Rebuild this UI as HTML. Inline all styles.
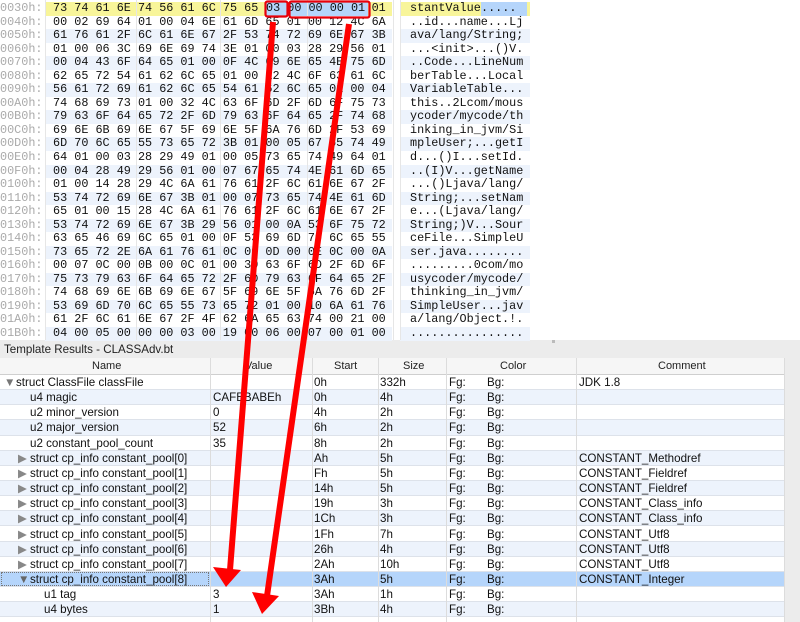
<!DOCTYPE html>
<html><head><meta charset="utf-8"><style>
*{margin:0;padding:0;box-sizing:border-box}
body{width:800px;height:622px;overflow:hidden;background:#fff;position:relative;font-family:"Liberation Sans",sans-serif}
.hr{position:absolute;left:0;width:800px;height:13.54px;font-family:"Liberation Mono",monospace;font-size:11.8px;line-height:13.54px;white-space:pre;color:#111}
.off{position:absolute;left:0;color:#aaa;width:45px}
.hx{position:absolute;left:45px;width:347px;height:13.54px;padding-left:8px}
.as{position:absolute;left:400px;width:130px;height:13.54px;padding-left:10px}
.b .hx,.b .as{background:#edf3fc}
.y .hx,.y .as{background:#f8f59a}
.vl{position:absolute;top:0;height:340px;width:1px;background:#e6e6e6}
.tr{position:absolute;left:0;width:784px;height:15.15px;font-size:11.6px;line-height:15.15px;color:#111;border-bottom:1px solid #dde2ea}
.tr.b{background:#edf3fc}
.tr.s{background:#b5d5fb}
.tr span{position:absolute;top:0}
.c{position:absolute;top:358px;width:1px;height:264px;background:#dcdcdc}
</style></head><body>
<div style="position:absolute;left:0;top:340px;width:800px;height:282px;background:#ececec"></div>
<div style="position:absolute;left:552px;top:340px;width:3px;height:3px;background:#bbb"></div>
<div style="position:absolute;left:4px;top:343px;font-size:11.6px;color:#222">Template Results - CLASSAdv.bt</div>
<div style="position:absolute;left:0;top:358px;width:784px;height:17px;background:#f6f6f6;border-bottom:1px solid #cfcfcf;font-size:11px;color:#222">
<span style="position:absolute;left:92px;top:2px">Name</span><span style="position:absolute;left:245px;top:2px">Value</span><span style="position:absolute;left:334px;top:2px">Start</span><span style="position:absolute;left:403px;top:2px">Size</span><span style="position:absolute;left:500px;top:2px">Color</span><span style="position:absolute;left:658px;top:2px">Comment</span></div>
<div style="position:absolute;left:0;top:375px;width:784px;height:247px;background:#fff"></div>

<div class="hr y" style="top:2px"><span class="off">0030h:</span><span class="hx">73 74 61 6E 74 56 61 6C 75 65 03 00 00 00 01 01</span><span class="as">stantValue......</span></div>
<div style="position:absolute;left:265px;top:2px;width:103px;height:13.5px;background:#b5d5fb"></div>
<div style="position:absolute;left:266px;top:2px;font-family:'Liberation Mono',monospace;font-size:11.8px;line-height:13.54px;white-space:pre;color:#111">03 00 00 00 01</div>
<div style="position:absolute;left:481px;top:2px;width:46px;height:13.5px;background:#b5d5fb"></div>
<div style="position:absolute;left:481px;top:2px;font-family:'Liberation Mono',monospace;font-size:11.8px;line-height:13.54px;white-space:pre;color:#111">.....</div>
<div class="hr" style="top:15.5px"><span class="off">0040h:</span><span class="hx">00 02 69 64 01 00 04 6E 61 6D 65 01 00 12 4C 6A</span><span class="as">..id...name...Lj</span></div>
<div class="hr b" style="top:29.1px"><span class="off">0050h:</span><span class="hx">61 76 61 2F 6C 61 6E 67 2F 53 74 72 69 6E 67 3B</span><span class="as">ava/lang/String;</span></div>
<div class="hr" style="top:42.6px"><span class="off">0060h:</span><span class="hx">01 00 06 3C 69 6E 69 74 3E 01 00 03 28 29 56 01</span><span class="as">...&lt;init&gt;...()V.</span></div>
<div class="hr b" style="top:56.2px"><span class="off">0070h:</span><span class="hx">00 04 43 6F 64 65 01 00 0F 4C 69 6E 65 4E 75 6D</span><span class="as">..Code...LineNum</span></div>
<div class="hr" style="top:69.7px"><span class="off">0080h:</span><span class="hx">62 65 72 54 61 62 6C 65 01 00 12 4C 6F 63 61 6C</span><span class="as">berTable...Local</span></div>
<div class="hr b" style="top:83.2px"><span class="off">0090h:</span><span class="hx">56 61 72 69 61 62 6C 65 54 61 62 6C 65 01 00 04</span><span class="as">VariableTable...</span></div>
<div class="hr" style="top:96.8px"><span class="off">00A0h:</span><span class="hx">74 68 69 73 01 00 32 4C 63 6F 6D 2F 6D 6F 75 73</span><span class="as">this..2Lcom/mous</span></div>
<div class="hr b" style="top:110.3px"><span class="off">00B0h:</span><span class="hx">79 63 6F 64 65 72 2F 6D 79 63 6F 64 65 2F 74 68</span><span class="as">ycoder/mycode/th</span></div>
<div class="hr" style="top:123.9px"><span class="off">00C0h:</span><span class="hx">69 6E 6B 69 6E 67 5F 69 6E 5F 6A 76 6D 2F 53 69</span><span class="as">inking_in_jvm/Si</span></div>
<div class="hr b" style="top:137.4px"><span class="off">00D0h:</span><span class="hx">6D 70 6C 65 55 73 65 72 3B 01 00 05 67 65 74 49</span><span class="as">mpleUser;...getI</span></div>
<div class="hr" style="top:150.9px"><span class="off">00E0h:</span><span class="hx">64 01 00 03 28 29 49 01 00 05 73 65 74 49 64 01</span><span class="as">d...()I...setId.</span></div>
<div class="hr b" style="top:164.5px"><span class="off">00F0h:</span><span class="hx">00 04 28 49 29 56 01 00 07 67 65 74 4E 61 6D 65</span><span class="as">..(I)V...getName</span></div>
<div class="hr" style="top:178px"><span class="off">0100h:</span><span class="hx">01 00 14 28 29 4C 6A 61 76 61 2F 6C 61 6E 67 2F</span><span class="as">...()Ljava/lang/</span></div>
<div class="hr b" style="top:191.6px"><span class="off">0110h:</span><span class="hx">53 74 72 69 6E 67 3B 01 00 07 73 65 74 4E 61 6D</span><span class="as">String;...setNam</span></div>
<div class="hr" style="top:205.1px"><span class="off">0120h:</span><span class="hx">65 01 00 15 28 4C 6A 61 76 61 2F 6C 61 6E 67 2F</span><span class="as">e...(Ljava/lang/</span></div>
<div class="hr b" style="top:218.6px"><span class="off">0130h:</span><span class="hx">53 74 72 69 6E 67 3B 29 56 01 00 0A 53 6F 75 72</span><span class="as">String;)V...Sour</span></div>
<div class="hr" style="top:232.2px"><span class="off">0140h:</span><span class="hx">63 65 46 69 6C 65 01 00 0F 53 69 6D 70 6C 65 55</span><span class="as">ceFile...SimpleU</span></div>
<div class="hr b" style="top:245.7px"><span class="off">0150h:</span><span class="hx">73 65 72 2E 6A 61 76 61 0C 00 0D 00 0E 0C 00 0A</span><span class="as">ser.java........</span></div>
<div class="hr" style="top:259.3px"><span class="off">0160h:</span><span class="hx">00 07 0C 00 0B 00 0C 01 00 30 63 6F 6D 2F 6D 6F</span><span class="as">.........0com/mo</span></div>
<div class="hr b" style="top:272.8px"><span class="off">0170h:</span><span class="hx">75 73 79 63 6F 64 65 72 2F 6D 79 63 6F 64 65 2F</span><span class="as">usycoder/mycode/</span></div>
<div class="hr" style="top:286.3px"><span class="off">0180h:</span><span class="hx">74 68 69 6E 6B 69 6E 67 5F 69 6E 5F 6A 76 6D 2F</span><span class="as">thinking_in_jvm/</span></div>
<div class="hr b" style="top:299.9px"><span class="off">0190h:</span><span class="hx">53 69 6D 70 6C 65 55 73 65 72 01 00 10 6A 61 76</span><span class="as">SimpleUser...jav</span></div>
<div class="hr" style="top:313.4px"><span class="off">01A0h:</span><span class="hx">61 2F 6C 61 6E 67 2F 4F 62 6A 65 63 74 00 21 00</span><span class="as">a/lang/Object.!.</span></div>
<div class="hr b" style="top:327px"><span class="off">01B0h:</span><span class="hx">04 00 05 00 00 00 03 00 19 00 06 00 07 00 01 00</span><span class="as">................</span></div>
<div class="vl" style="left:45px"></div><div class="vl" style="left:136px"></div><div class="vl" style="left:220px"></div><div class="vl" style="left:307px"></div><div class="vl" style="left:393px"></div><div class="vl" style="left:400px"></div>

<div class="tr" style="top:375px"><span style="left:4px;color:#777">▼</span><span style="left:16px">struct ClassFile classFile</span><span style="left:314px">0h</span><span style="left:380px">332h</span><span style="left:449px">Fg:</span><span style="left:487px">Bg:</span><span style="left:579px">JDK 1.8</span></div>
<div class="tr b" style="top:390.15px"><span style="left:30px">u4 magic</span><span style="left:213px">CAFEBABEh</span><span style="left:314px">0h</span><span style="left:380px">4h</span><span style="left:449px">Fg:</span><span style="left:487px">Bg:</span></div>
<div class="tr" style="top:405.3px"><span style="left:30px">u2 minor_version</span><span style="left:213px">0</span><span style="left:314px">4h</span><span style="left:380px">2h</span><span style="left:449px">Fg:</span><span style="left:487px">Bg:</span></div>
<div class="tr b" style="top:420.45px"><span style="left:30px">u2 major_version</span><span style="left:213px">52</span><span style="left:314px">6h</span><span style="left:380px">2h</span><span style="left:449px">Fg:</span><span style="left:487px">Bg:</span></div>
<div class="tr" style="top:435.6px"><span style="left:30px">u2 constant_pool_count</span><span style="left:213px">35</span><span style="left:314px">8h</span><span style="left:380px">2h</span><span style="left:449px">Fg:</span><span style="left:487px">Bg:</span></div>
<div class="tr b" style="top:450.75px"><span style="left:18px;color:#888">▶</span><span style="left:30px">struct cp_info constant_pool[0]</span><span style="left:314px">Ah</span><span style="left:380px">5h</span><span style="left:449px">Fg:</span><span style="left:487px">Bg:</span><span style="left:579px">CONSTANT_Methodref</span></div>
<div class="tr" style="top:465.9px"><span style="left:18px;color:#888">▶</span><span style="left:30px">struct cp_info constant_pool[1]</span><span style="left:314px">Fh</span><span style="left:380px">5h</span><span style="left:449px">Fg:</span><span style="left:487px">Bg:</span><span style="left:579px">CONSTANT_Fieldref</span></div>
<div class="tr b" style="top:481.05px"><span style="left:18px;color:#888">▶</span><span style="left:30px">struct cp_info constant_pool[2]</span><span style="left:314px">14h</span><span style="left:380px">5h</span><span style="left:449px">Fg:</span><span style="left:487px">Bg:</span><span style="left:579px">CONSTANT_Fieldref</span></div>
<div class="tr" style="top:496.2px"><span style="left:18px;color:#888">▶</span><span style="left:30px">struct cp_info constant_pool[3]</span><span style="left:314px">19h</span><span style="left:380px">3h</span><span style="left:449px">Fg:</span><span style="left:487px">Bg:</span><span style="left:579px">CONSTANT_Class_info</span></div>
<div class="tr b" style="top:511.35px"><span style="left:18px;color:#888">▶</span><span style="left:30px">struct cp_info constant_pool[4]</span><span style="left:314px">1Ch</span><span style="left:380px">3h</span><span style="left:449px">Fg:</span><span style="left:487px">Bg:</span><span style="left:579px">CONSTANT_Class_info</span></div>
<div class="tr" style="top:526.5px"><span style="left:18px;color:#888">▶</span><span style="left:30px">struct cp_info constant_pool[5]</span><span style="left:314px">1Fh</span><span style="left:380px">7h</span><span style="left:449px">Fg:</span><span style="left:487px">Bg:</span><span style="left:579px">CONSTANT_Utf8</span></div>
<div class="tr b" style="top:541.65px"><span style="left:18px;color:#888">▶</span><span style="left:30px">struct cp_info constant_pool[6]</span><span style="left:314px">26h</span><span style="left:380px">4h</span><span style="left:449px">Fg:</span><span style="left:487px">Bg:</span><span style="left:579px">CONSTANT_Utf8</span></div>
<div class="tr" style="top:556.8px"><span style="left:18px;color:#888">▶</span><span style="left:30px">struct cp_info constant_pool[7]</span><span style="left:314px">2Ah</span><span style="left:380px">10h</span><span style="left:449px">Fg:</span><span style="left:487px">Bg:</span><span style="left:579px">CONSTANT_Utf8</span></div>
<div class="tr s" style="top:571.95px"><span style="left:18px;color:#666">▼</span><span style="left:30px">struct cp_info constant_pool[8]</span><span style="left:314px">3Ah</span><span style="left:380px">5h</span><span style="left:449px">Fg:</span><span style="left:487px">Bg:</span><span style="left:579px">CONSTANT_Integer</span></div>
<div style="position:absolute;left:1px;top:572px;width:208px;height:14px;border:1px dotted #777"></div>
<div class="tr" style="top:587.1px"><span style="left:44px">u1 tag</span><span style="left:213px">3</span><span style="left:314px">3Ah</span><span style="left:380px">1h</span><span style="left:449px">Fg:</span><span style="left:487px">Bg:</span></div>
<div class="tr b" style="top:602.25px"><span style="left:44px">u4 bytes</span><span style="left:213px">1</span><span style="left:314px">3Bh</span><span style="left:380px">4h</span><span style="left:449px">Fg:</span><span style="left:487px">Bg:</span></div>
<div class="c" style="left:210px"></div><div class="c" style="left:312px"></div><div class="c" style="left:378px"></div><div class="c" style="left:446px"></div><div class="c" style="left:576px"></div><div class="c" style="left:784px"></div>

<svg style="position:absolute;left:0;top:0" width="800" height="622">
<rect x="265.5" y="1.5" width="22" height="15" rx="2" fill="none" stroke="#e8000b" stroke-width="2.2"/>
<rect x="289.5" y="1.5" width="80" height="16" rx="2" fill="none" stroke="#e8000b" stroke-width="2.2"/>
<line x1="273" y1="22" x2="230" y2="570" stroke="#f00" stroke-width="6"/>
<polygon points="213,567 241,570 226,587" fill="#f00"/>
<line x1="349" y1="24" x2="267" y2="596" stroke="#f00" stroke-width="6"/>
<polygon points="252,592 279,596 262,614" fill="#f00"/>
</svg>
</body></html>
